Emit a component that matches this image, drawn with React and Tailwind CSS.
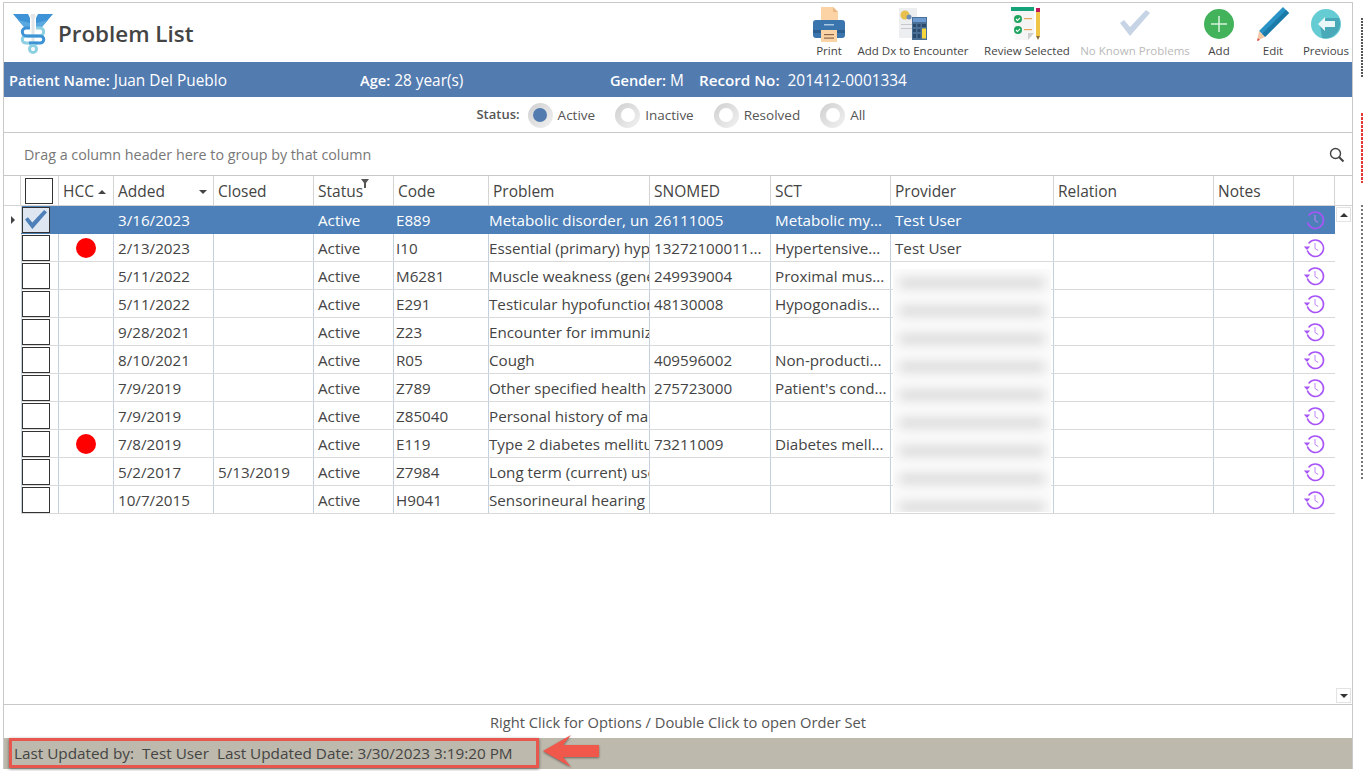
import React from "react";

const gridCols =
  "grid w-[1331px] grid-cols-[17px_38px_55px_100px_100px_80px_95px_161px_121px_120px_163px_160px_80px_41px]";

const rows = [
  { added: "3/16/2023", code: "E889", problem: "Metabolic disorder, unspecified", snomed: "26111005", sct: "Metabolic my...", provider: "Test User", checked: true },
  { hcc: true, added: "2/13/2023", code: "I10", problem: "Essential (primary) hypertension", snomed: "13272100011...", sct: "Hypertensive...", provider: "Test User" },
  { added: "5/11/2022", code: "M6281", problem: "Muscle weakness (generalized)", snomed: "249939004", sct: "Proximal mus..." },
  { added: "5/11/2022", code: "E291", problem: "Testicular hypofunction", snomed: "48130008", sct: "Hypogonadis..." },
  { added: "9/28/2021", code: "Z23", problem: "Encounter for immunization" },
  { added: "8/10/2021", code: "R05", problem: "Cough", snomed: "409596002", sct: "Non-producti..." },
  { added: "7/9/2019", code: "Z789", problem: "Other specified health status", snomed: "275723000", sct: "Patient's cond..." },
  { added: "7/9/2019", code: "Z85040", problem: "Personal history of malignant" },
  { hcc: true, added: "7/8/2019", code: "E119", problem: "Type 2 diabetes mellitus without", snomed: "73211009", sct: "Diabetes mell..." },
  { added: "5/2/2017", closed: "5/13/2019", code: "Z7984", problem: "Long term (current) use of" },
  { added: "10/7/2015", code: "H9041", problem: "Sensorineural hearing loss" },
];

const Logo = () => (
  <svg width="40" height="40" viewBox="0 0 40 40" fill="none">
    <path d="M0 0h15l2 4v9l-5 1z" fill="#3d93d6" />
    <path d="M40 0H25l-2 4v9l5 1z" fill="#3d93d6" />
    <path d="M5 6l12 3v5l-5 0z" fill="#5aa9e0" />
    <path d="M35 6l-12 3v5l5 0z" fill="#5aa9e0" />
    <rect x="18.5" y="0" width="3" height="30" fill="#e3e6e9" />
    <circle cx="20" cy="2" r="2.5" fill="#e3e6e9" />
    <path d="M23 14h4c5 0 5 8-1 8H13c-5 0-5 7 0 7h12" stroke="#8dd0e2" strokeWidth="3" />
    <path d="M17 14h-4c-5 0-5 8 1 8h13c5 0 5 7 0 7H16" stroke="#3d93d6" strokeWidth="3" />
    <circle cx="20" cy="35" r="3.5" stroke="#8dd0e2" strokeWidth="3" />
  </svg>
);

const PrintIcon = () => (
  <svg width="32" height="36" viewBox="0 0 32 36">
    <path d="M8 1h12l5 5v10H8z" fill="#fbd3a4" />
    <path d="M20 1l5 5h-5z" fill="#e8b987" />
    <path d="M3 14h26a3 3 0 0 1 3 3v12a3 3 0 0 1-3 3H3a3 3 0 0 1-3-3V17a3 3 0 0 1 3-3z" fill="#3a76ad" />
    <rect x="0" y="24" width="32" height="3" fill="#2c5f90" />
    <rect x="11" y="18" width="10" height="1.5" fill="#a9c8e2" />
    <path d="M8 24h16v12H8z" fill="#fbd3a4" />
    <rect x="11" y="28" width="10" height="1.2" fill="#8b6a4b" />
    <rect x="11" y="31.5" width="10" height="1.2" fill="#8b6a4b" />
  </svg>
);

const CalcIcon = () => (
  <svg width="28" height="32" viewBox="0 0 28 32">
    <rect x="0" y="0" width="18" height="30" fill="#eceef0" />
    <circle cx="6" cy="7" r="4.5" fill="#e8c04e" />
    <circle cx="10" cy="9" r="2.5" fill="#6e8fb5" />
    <rect x="2" y="16" width="11" height="1" fill="#c5c9cd" />
    <rect x="2" y="20" width="11" height="1" fill="#c5c9cd" />
    <rect x="13" y="9" width="15" height="23" fill="#4a6f96" />
    <rect x="14" y="10" width="13" height="4" fill="#6d9bd1" />
    <rect x="14" y="16" width="3" height="3" fill="#2c4a6b" />
    <rect x="18.5" y="16" width="3" height="3" fill="#2c4a6b" />
    <rect x="23" y="16" width="4" height="3" fill="#2c4a6b" />
    <rect x="14" y="21" width="3" height="3" fill="#2c4a6b" />
    <rect x="18.5" y="21" width="3" height="3" fill="#2c4a6b" />
    <rect x="14" y="26" width="3" height="4" fill="#2c4a6b" />
    <rect x="18.5" y="26" width="3" height="4" fill="#2c4a6b" />
    <rect x="23" y="20.5" width="4" height="10" fill="#f5d63d" />
  </svg>
);

const ReviewIcon = () => (
  <svg width="32" height="34" viewBox="0 0 32 34">
    <path d="M0 1h23v25l-6 7H4z" fill="#f5f5f5" />
    <rect x="0" y="0" width="23" height="4" fill="#16a37a" />
    <path d="M23 26l-6 7v-7z" fill="#cfcfcf" />
    <circle cx="7" cy="12" r="4" fill="#1fa45f" />
    <circle cx="7" cy="23" r="4" fill="#1fa45f" />
    <path d="M5 12l1.5 1.5 2.5-2.7M5 23l1.5 1.5 2.5-2.7" stroke="#fff" strokeWidth="1.1" fill="none" />
    <rect x="13" y="11" width="8" height="1.2" fill="#e9a35a" />
    <rect x="13" y="22" width="8" height="1.2" fill="#e9a35a" />
    <rect x="25" y="1" width="4" height="4" fill="#c2185b" />
    <rect x="25" y="5" width="4" height="24" fill="#f0c445" />
    <path d="M25 29h4l-2 4z" fill="#8a6d3b" />
  </svg>
);

const CheckIcon = ({ color = "#c6d4e6", size = 30 }) => (
  <svg width={size} height={size * 0.87} viewBox="0 0 30 26">
    <path d="M0 13l4-3 6 7L26 0l4 3-20 23z" fill={color} />
  </svg>
);

const AddIcon = () => (
  <svg width="30" height="30" viewBox="0 0 30 30">
    <circle cx="15" cy="15" r="15" fill="#42b25b" />
    <path d="M15 7v16M7 15h16" stroke="#d9f2df" strokeWidth="1.5" />
  </svg>
);

const EditIcon = () => (
  <svg width="32" height="34" viewBox="0 0 32 34">
    <path d="M26 0l6 6L8 30l-6-6z" fill="#2a93c6" />
    <path d="M29 3l3 3L8 30l-3-3z" fill="#1b7aa8" />
    <path d="M2 24l6 6-8 4z" fill="#f3c9a6" />
    <path d="M0.8 31l2.2 1.9-3 1.1z" fill="#d94f5c" />
  </svg>
);

const PrevIcon = () => (
  <svg width="30" height="30" viewBox="0 0 30 30">
    <circle cx="15" cy="15" r="15" fill="#66ccd3" />
    <path d="M9 15l6-6h13a15 15 0 0 1-17 20z" fill="#4aa9b8" />
    <path d="M14 8l-7 7 7 7v-4h10v-6H14z" fill="#e9f7f8" />
  </svg>
);

const HistoryIcon = ({ dim }) => (
  <svg width="22" height="22" viewBox="0 0 22 22" fill="none">
    <path d="M5 6a8.2 8.2 0 1 1-1.4 8" stroke="#a855f7" strokeWidth="1.6" strokeLinecap="round" transform="translate(1 0)" />
    {!dim && <path d="M0.8 9.5h6.4l-3.2 3.6z" fill="#a855f7" />}
    <path d="M12 6v5.5l3.2 2" stroke="#c084fc" strokeWidth="1" />
  </svg>
);

const ToolButton = ({ icon, label, width, disabled, className }) => (
  <div className={`flex flex-col items-center shrink-0 ${className || ""}`} style={{ width }}>
    <div className="h-[39px] flex items-center justify-center">{icon}</div>
    <span className={`text-[11.5px] leading-[16px] whitespace-nowrap ${disabled ? "text-[#b9b9b9]" : "text-[#444]"}`}>
      {label}
    </span>
  </div>
);

const Radio = ({ label, active }) => (
  <div className="flex items-center gap-[5px]">
    <span className="w-[25px] h-[25px] rounded-full bg-gradient-to-br from-[#cfcfcf] to-[#f2f2f2] flex items-center justify-center">
      <span className={`w-[14px] h-[14px] rounded-full ${active ? "bg-[#527bb0]" : "bg-white"}`} />
    </span>
    <span className="text-[#555]">{label}</span>
  </div>
);

const HeadCell = ({ children, className }) => (
  <div className={`h-[29px] pl-[4px] pt-[2px] flex items-center border-r border-[#d4d4d4] whitespace-nowrap relative ${className || ""}`}>
    {children}
  </div>
);

const Cell = ({ children, selected, className }) => (
  <div
    className={`h-[27px] pl-[4px] pt-[1px] flex items-center overflow-hidden whitespace-nowrap border-r ${
      selected ? "border-transparent" : "border-[#c5d0de]"
    } ${className || ""}`}
  >
    {children}
  </div>
);

const Row = ({ row }) => {
  const sel = row.checked;
  return (
    <div className={`${gridCols} border-b h-[28px] text-[15.2px] ${sel ? "bg-[#4d7fb9] text-white border-[#4d7fb9]" : "border-[#d9d9d9] text-[#444]"}`}>
      <div className="bg-white h-[28px] flex items-center justify-center">
        {sel && <span className="w-0 h-0 border-y-[4px] border-y-transparent border-l-[4px] border-l-[#444] ml-[1px]" />}
      </div>
      <Cell selected={sel} className="border-l border-l-[#c5d0de] !pl-0 !pt-0">
        <span className={`w-[28px] h-[26px] border border-[#333] flex items-center justify-center ${sel ? "bg-[#dde6f1]" : "bg-white"}`}>
          {sel && <CheckIcon color="#4d7fb9" size={22} />}
        </span>
      </Cell>
      <Cell selected={sel} className="justify-center !pl-0 !pt-0">
        {row.hcc && <span className="w-[20px] h-[20px] rounded-full bg-[#ff0000]" />}
      </Cell>
      <Cell selected={sel}>{row.added}</Cell>
      <Cell selected={sel}>{row.closed}</Cell>
      <Cell selected={sel}>Active</Cell>
      <Cell selected={sel} className="!pl-[2px]">{row.code}</Cell>
      <Cell selected={sel} className="!pl-0">{row.problem}</Cell>
      <Cell selected={sel}>{row.snomed}</Cell>
      <Cell selected={sel}>{row.sct}</Cell>
      <Cell selected={sel}>{row.provider}</Cell>
      <Cell selected={sel} />
      <Cell selected={sel} />
      <div className="h-[27px] flex items-center justify-center pr-[2px]">
        <HistoryIcon dim={sel} />
      </div>
    </div>
  );
};

export default function App() {
  return (
    <div className="relative w-[1364px] h-[771px] bg-white overflow-hidden font-['Open_Sans','Noto_Sans',sans-serif] text-[14px] text-[#444]">
      <div className="ml-[3px] mt-[2px] w-[1350px] h-[767px] border-x border-t border-[#c8c8c8] flex flex-col">
        {/* title + toolbar */}
        <div className="h-[59px] flex items-start shrink-0">
          <div className="flex items-center pl-[9px] pt-[9px]">
            <Logo />
            <span className="ml-[5px] text-[22.4px] font-semibold text-[#444] leading-[44px]">Problem List</span>
          </div>
          <div className="ml-auto flex pr-[3px] pt-[1px]">
            <ToolButton icon={<PrintIcon />} label="Print" width={56} />
            <ToolButton icon={<CalcIcon />} label="Add Dx to Encounter" width={112} />
            <ToolButton icon={<ReviewIcon />} label="Review Selected" width={86} className="ml-[15px]" />
            <ToolButton icon={<CheckIcon />} label="No Known Problems" width={110} disabled className="ml-[10px]" />
            <ToolButton icon={<AddIcon />} label="Add" width={40} className="ml-[9px]" />
            <ToolButton icon={<EditIcon />} label="Edit" width={40} className="ml-[14px]" />
            <ToolButton icon={<PrevIcon />} label="Previous" width={46} className="ml-[10px]" />
          </div>
        </div>

        {/* patient banner */}
        <div className="h-[35px] pt-[3px] bg-[#527bb0] text-white flex items-center shrink-0 pl-[5px] text-[15.4px]">
          <div className="w-[351px] whitespace-nowrap"><b className="font-semibold text-[14.6px]">Patient Name:</b> Juan Del Pueblo</div>
          <div className="w-[250px] whitespace-nowrap"><b className="font-semibold text-[14.6px]">Age:</b> 28 year(s)</div>
          <div className="w-[89px] whitespace-nowrap"><b className="font-semibold text-[14.6px]">Gender:</b> M</div>
          <div className="whitespace-nowrap"><b className="font-semibold text-[15.2px] mr-[4px]">Record No:</b> 201412-0001334</div>
        </div>

        {/* status filter */}
        <div className="h-[35px] pt-[1px] flex items-center justify-center gap-[20px] shrink-0 text-[13.5px] pr-[14px]">
          <div className="flex items-center gap-[8px]">
            <span className="font-semibold text-[13px] text-[#555]">Status:</span>
            <Radio label="Active" active />
          </div>
          <Radio label="Inactive" />
          <Radio label="Resolved" />
          <Radio label="All" />
        </div>

        {/* grid */}
        <div className="flex-1 mx-0 border-t border-b border-[#c8c8c8] flex flex-col min-h-0">
          <div className="h-[43px] pt-[1px] flex items-center justify-between pl-[20px] pr-[7px] border-b border-[#c8c8c8] text-[14.3px] text-[#777] shrink-0">
            <span>Drag a column header here to group by that column</span>
            <svg width="16" height="16" viewBox="0 0 16 16" fill="none" stroke="#444" strokeWidth="1.4">
              <circle cx="6.5" cy="6.5" r="5" />
              <path d="M10.2 10.2L14.5 14.5" strokeWidth="2" />
            </svg>
          </div>

          <div className={`${gridCols} !w-full border-b border-[#d4d4d4] h-[30px] shrink-0 text-[15.5px]`}>
            <div className="h-[29px] border-r border-[#d4d4d4]" />
            <HeadCell className="!pt-0">
              <span className="w-[28px] h-[26px] border border-[#333] bg-white" />
            </HeadCell>
            <HeadCell>
              HCC
              <span className="ml-[4px] w-0 h-0 border-x-[4px] border-x-transparent border-b-[4px] border-b-[#444]" />
            </HeadCell>
            <HeadCell>
              Added
              <span className="absolute right-[6px] top-[14px] w-0 h-0 border-x-[4px] border-x-transparent border-t-[4px] border-t-[#444]" />
            </HeadCell>
            <HeadCell>Closed</HeadCell>
            <HeadCell>
              Status
              <svg className="absolute left-[47px] top-[3px]" width="8" height="9" viewBox="0 0 8 9" fill="#555">
                <path d="M0 0h8L5 4v5H3V4z" />
              </svg>
            </HeadCell>
            <HeadCell>Code</HeadCell>
            <HeadCell>Problem</HeadCell>
            <HeadCell>SNOMED</HeadCell>
            <HeadCell>SCT</HeadCell>
            <HeadCell>Provider</HeadCell>
            <HeadCell>Relation</HeadCell>
            <HeadCell>Notes</HeadCell>
            <HeadCell />
          </div>

          <div className="flex-1 relative min-h-0">
            {rows.map((row) => (
              <Row key={row.code} row={row} />
            ))}

            {/* blurred provider names */}
            <div className="absolute left-[889px] top-[63px] w-[158px] h-[243px] bg-[#fcfcfc] overflow-hidden flex flex-col">
              {rows.slice(2).map((row) => (
                <div key={row.code} className="h-[28px] shrink-0 flex items-center px-[6px]">
                  <div className="w-full h-[10px] bg-[#d6d6d6] blur-[6px]" />
                </div>
              ))}
            </div>

            {/* scrollbar arrows */}
            <div className="absolute right-[1px] top-[1px] w-[15px] h-[15px] border border-[#e3e3e3] flex items-center justify-center">
              <span className="w-0 h-0 border-x-[4px] border-x-transparent border-b-[4px] border-b-[#333]" />
            </div>
            <div className="absolute right-[1px] bottom-[1px] w-[15px] h-[15px] border border-[#e3e3e3] flex items-center justify-center">
              <span className="w-0 h-0 border-x-[4px] border-x-transparent border-t-[4px] border-t-[#333]" />
            </div>
          </div>
        </div>

        <div className="h-[33px] pt-[2px] flex items-center justify-center shrink-0 text-[14.7px] text-[#555]">
          Right Click for Options / Double Click to open Order Set
        </div>
        <div className="h-[31px] bg-[#bdb9ac] flex items-center shrink-0 pl-[10px] text-[15.3px] text-[#444]">
          <span className="whitespace-pre">Last Updated by:  Test User  Last Updated Date: 3/30/2023 3:19:20 PM</span>
        </div>
      </div>

      {/* annotation */}
      <div className="absolute left-[9px] top-[738px] w-[530px] h-[30px] border-[3px] border-[#e8574d] shadow-[0_1px_3px_rgba(0,0,0,0.5)]" />
      <svg className="absolute left-[541px] top-[734px] drop-shadow-[0_1px_1px_rgba(0,0,0,0.45)]" width="60" height="34" viewBox="0 0 60 34">
        <path d="M2 17L30 1l-8 10h36v12H22l8 10z" fill="#f0584c" />
      </svg>

      {/* edge of the window behind */}
      <svg className="absolute left-[1360px] top-0" width="4" height="490">
        <path d="M2 18V78" stroke="#555" strokeWidth="2" strokeDasharray="2 1" />
        <path d="M2 113V183" stroke="#e53935" strokeWidth="2" strokeDasharray="3 1" />
        <path d="M2 205V480" stroke="#777" strokeWidth="2" strokeDasharray="2 2" />
      </svg>
    </div>
  );
}
